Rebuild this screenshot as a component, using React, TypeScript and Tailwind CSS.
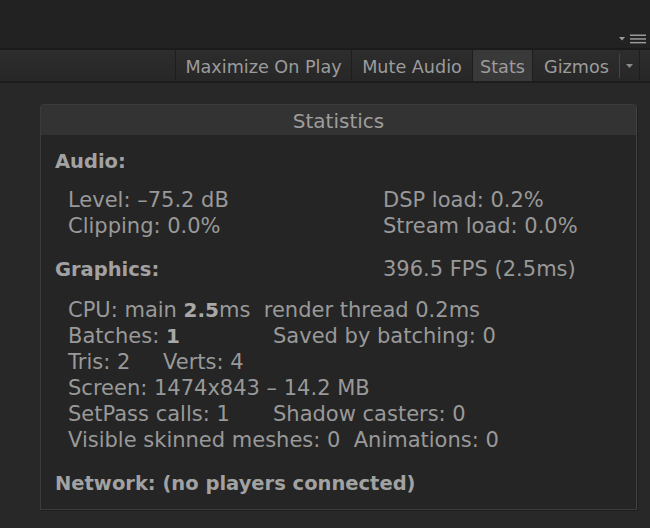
import React from 'react'

const font = { fontFamily: '"DejaVu Sans", "Liberation Sans", sans-serif' }

function ToolbarMenuIcon() {
  return (
    <svg width="28" height="10" viewBox="0 0 28 10" className="block">
      <polygon points="0,3 6,3 3,6.5" fill="#9a9a9a" />
      <rect x="11" y="0.5" width="16" height="1.5" fill="#9a9a9a" />
      <rect x="11" y="4.2" width="16" height="1.5" fill="#9a9a9a" />
      <rect x="11" y="7.9" width="16" height="1.5" fill="#9a9a9a" />
    </svg>
  )
}

function Row({ children, className = '' }: { children: React.ReactNode; className?: string }) {
  return <div className={`flex h-[26px] items-center whitespace-pre ${className}`}>{children}</div>
}

export default function App() {
  return (
    <div style={font} className="w-[650px] h-[528px] bg-[#282828] overflow-hidden">
      {/* top strip */}
      <div className="h-[50px] bg-[#222222] border-b-2 border-[#1b1b1b] flex items-end justify-end pr-[3px] pb-[4px]">
        <ToolbarMenuIcon />
      </div>

      {/* toolbar */}
      <div className="h-[33px] flex bg-gradient-to-b from-[#2d2d2d] to-[#272727] border-b-2 border-[#1d1d1d] text-[17.6px] text-[#9c9c9c]">
        <div className="ml-auto flex">
          <div className="w-[176px] border-l border-[#1e1e1e] flex items-center justify-center pt-[3px]">Maximize On Play</div>
          <div className="w-[121px] border-l border-[#1e1e1e] flex items-center justify-center pt-[3px]">Mute Audio</div>
          <div className="w-[60px] border-l border-[#1e1e1e] bg-[#393939] flex items-center justify-center pt-[3px]">Stats</div>
          <div className="w-[108px] border-l border-r border-[#1e1e1e] flex items-center">
            <span className="pl-[11px] pt-[3px]">Gizmos</span>
            <span className="ml-[10px] h-[24px] w-px bg-[#454545]" />
            <svg width="8" height="6" viewBox="0 0 8 6" className="ml-[6px]">
              <polygon points="0,1 7,1 3.5,5" fill="#8a8a8a" />
            </svg>
          </div>
          <div className="w-[10px]" />
        </div>
      </div>

      {/* statistics panel */}
      <div className="ml-[40px] mt-[21px] w-[597px] h-[406px] rounded-t-[4px] border border-[#3b3b3b] border-r-[#444444] bg-[#252525] shadow-[1px_1px_0_#1e1e1e]">
        <div className="h-[30px] bg-[#333333] rounded-t-[3px] flex items-center justify-center pt-[2px] text-[20px] text-[#9e9e9e]">
          Statistics
        </div>

        <div className="pl-[14px] pt-[14px] text-[21px] text-[#999999]">
          <Row className="font-bold text-[19.5px] text-[#a2a2a2]">Audio:</Row>

          <div className="mt-[13px] pl-[13px]">
            <Row>
              <span className="w-[315px]">Level: –75.2 dB</span>
              <span>DSP load: 0.2%</span>
            </Row>
            <Row>
              <span className="w-[315px]">Clipping: 0.0%</span>
              <span>Stream load: 0.0%</span>
            </Row>
          </div>

          <Row className="mt-[17px]">
            <span className="w-[328px] font-bold text-[19.5px] text-[#a2a2a2]">Graphics:</span>
            <span>396.5 FPS (2.5ms)</span>
          </Row>

          <div className="mt-[15px] pl-[13px]">
            <Row>
              <span>
                CPU: main <b className="text-[#a8a8a8] text-[20px]">2.5</b>ms  render thread 0.2ms
              </span>
            </Row>
            <Row>
              <span className="w-[205px]">
                Batches: <b className="text-[#a8a8a8] text-[20px]">1</b>
              </span>
              <span>Saved by batching: 0</span>
            </Row>
            <Row>
              <span className="w-[95px]">Tris: 2</span>
              <span>Verts: 4</span>
            </Row>
            <Row>Screen: 1474x843 – 14.2 MB</Row>
            <Row>
              <span className="w-[205px]">SetPass calls: 1</span>
              <span>Shadow casters: 0</span>
            </Row>
            <Row>Visible skinned meshes: 0  Animations: 0</Row>
          </div>

          <Row className="mt-[17px] font-bold text-[19.5px] text-[#a2a2a2]">Network: (no players connected)</Row>
        </div>
      </div>
    </div>
  )
}
